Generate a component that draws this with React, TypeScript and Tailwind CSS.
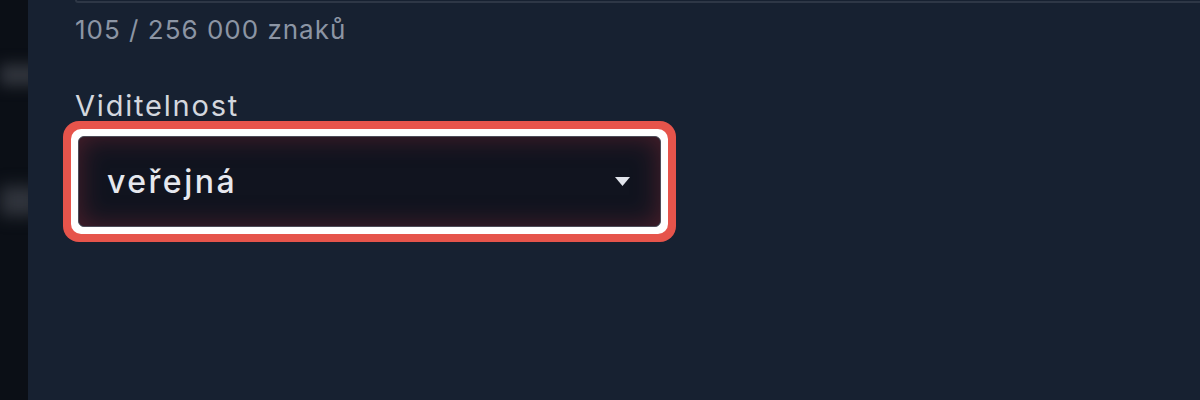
export default function App() {
  return (
    <div
      className="flex h-[400px] w-[1200px] overflow-hidden bg-[#172131]"
      style={{ fontFamily: "Inter, 'Noto Sans', sans-serif" }}
    >
      {/* blurred page behind the panel */}
      <div className="flex w-[28px] shrink-0 flex-col overflow-hidden bg-[#0b0f16]">
        <div className="mt-[64px] h-[22px] w-[40px] bg-[#30343c] blur-[7px]" />
        <div className="mt-[100px] h-[30px] w-[40px] bg-[#30343c] blur-[8px]" />
      </div>

      {/* panel */}
      <div className="flex flex-1 flex-col pl-[47px]">
        {/* end of the description textarea */}
        <div className="h-[3px] rounded-bl-[3px] border-b-2 border-l-2 border-[#2e3746]" />

        <p className="mt-[11px] text-[26px] leading-[32px] tracking-[1px] text-[#8c95a4]">
          105 / 256 000 znaků
        </p>

        <label className="mt-[45px] text-[29px] leading-[30px] tracking-[1.8px] text-[#d3d7de]">
          Viditelnost
        </label>

        {/* focused select */}
        <div className="-ml-[12px] w-[613px] rounded-[16px] bg-[#e6544b] p-[8px]">
          <div className="rounded-[10px] bg-white p-[7px]">
            <div className="flex h-[91px] items-center justify-between rounded-[6px] border border-[#4d4c58] bg-[#11141f] pl-[28px] pr-[30px] shadow-[inset_0_0_26px_rgba(125,40,52,0.55)]">
              <span className="text-[32px] font-medium tracking-[2.5px] text-[#e6e8ee]">veřejná</span>
              <svg width="15" height="9" viewBox="0 0 15 9">
                <path d="M0 0 H15 L7.5 9 Z" fill="#e2e5ec" />
              </svg>
            </div>
          </div>
        </div>
      </div>
    </div>
  );
}
